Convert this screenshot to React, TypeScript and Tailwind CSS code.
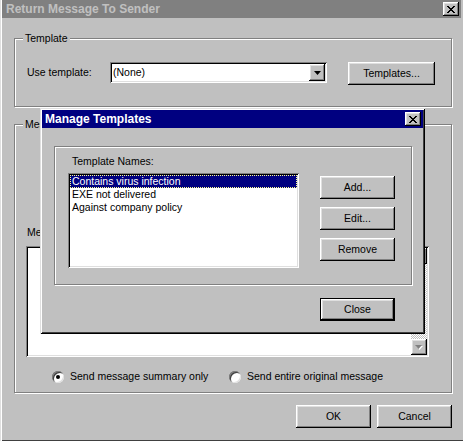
import React from 'react';

// win95-style bevels
const raised =
  'shadow-[inset_-1px_-1px_0_#000,inset_1px_1px_0_#fff,inset_-2px_-2px_0_#808080,inset_2px_2px_0_#dfdfdf]';
const sunken =
  'shadow-[inset_1px_1px_0_#808080,inset_-1px_-1px_0_#fff,inset_2px_2px_0_#000,inset_-2px_-2px_0_#dfdfdf]';
const etched = 'border border-[#808080] shadow-[inset_1px_1px_0_#fff,1px_1px_0_#fff]';

function Btn({
  children,
  className = '',
  isDefault = false,
}: {
  children: React.ReactNode;
  className?: string;
  isDefault?: boolean;
}) {
  return (
    <div className={`flex items-center justify-center bg-[#c0c0c0] ${isDefault ? 'border border-black' : ''} ${className}`}>
      <div className={`flex h-full w-full items-center justify-center ${raised}`}>{children}</div>
    </div>
  );
}

function CloseBox() {
  return (
    <div className={`flex h-[14px] w-[16px] items-center justify-center bg-[#c0c0c0] ${raised}`}>
      <svg width="8" height="7" viewBox="0 0 8 7" shapeRendering="crispEdges">
        <path d="M0 0h2v1h1v1h2V1h1V0h2v1H7v1H6v1H5v1h1v1h1v1h1v1H6V6H5V5H3v1H2v1H0V6h1V5h1V4h1V3H2V2H1V1H0z" fill="#000" />
      </svg>
    </div>
  );
}

function Radio({ checked, label }: { checked?: boolean; label: string }) {
  return (
    <div className="flex items-center">
      <div className="flex h-[12px] w-[12px] items-center justify-center rounded-full bg-white shadow-[inset_1px_1px_0_#808080,inset_-1px_-1px_0_#dfdfdf,inset_2px_2px_0_#404040]">
        {checked && <div className="h-[4px] w-[4px] rounded-full bg-black" />}
      </div>
      <span className="ml-[6px]">{label}</span>
    </div>
  );
}

export default function App() {
  const names = ['Contains virus infection', 'EXE not delivered', 'Against company policy'];

  return (
    <div className="relative h-[441px] w-[463px] overflow-hidden bg-[#c0c0c0] font-['Liberation_Sans',Arial,sans-serif] text-[10.5px] leading-[13px] text-black shadow-[inset_1px_0_0_#dfdfdf,inset_2px_0_0_#fff,inset_0_-1px_0_#404040]">
      {/* title bar (inactive) */}
      <div className="mx-[2px] flex h-[18px] items-center justify-between bg-[#808080] pl-[4px] pr-[2px]">
        <span className="text-[12px] font-bold text-[#c0c0c0]">Return Message To Sender</span>
        <CloseBox />
      </div>

      {/* Template group */}
      <div className={`relative ml-[14px] mt-[20px] h-[69px] w-[438px] ${etched}`}>
        <span className="absolute -top-[7px] left-[8px] bg-[#c0c0c0] px-[2px]">Template</span>
        <div className="flex items-start pl-[12px] pt-[23px]">
          <div className="flex h-[21px] w-[83px] items-center">Use template:</div>
          <div className={`flex h-[21px] w-[217px] items-center bg-white pl-[3px] pr-[2px] ${sunken}`}>
            <span className="flex-1">(None)</span>
            <div className={`flex h-[17px] w-[16px] items-center justify-center bg-[#c0c0c0] ${raised}`}>
              <svg width="7" height="4" viewBox="0 0 7 4">
                <polygon points="0,0 7,0 3.5,4" fill="#000" />
              </svg>
            </div>
          </div>
          <Btn className="ml-[21px] h-[23px] w-[87px]">Templates...</Btn>
        </div>
      </div>

      {/* Message group (mostly covered by the dialog) */}
      <div className={`relative ml-[14px] mt-[17px] h-[269px] w-[438px] ${etched}`}>
        <span className="absolute -top-[7px] left-[8px] bg-[#c0c0c0] px-[2px]">Message</span>
        <div className="pl-[11px] pt-[101px]">
          <div className="pl-[1px]">Message text:</div>
          <div className={`mt-[7px] flex h-[111px] w-[403px] bg-white p-[2px] ${sunken}`}>
            <div className="flex-1" />
            <div className="flex w-[16px] flex-col bg-[repeating-conic-gradient(#fff_0_25%,#c0c0c0_0_50%)] bg-[length:2px_2px]">
              <div className={`h-[16px] bg-[#c0c0c0] ${raised}`} />
              <div className="flex-1" />
              <div className={`flex h-[16px] items-center justify-center bg-[#c0c0c0] ${raised}`}>
                <svg width="8" height="5" viewBox="0 0 8 5">
                  <polygon points="1,1 8,1 4.5,5" fill="#fff" />
                  <polygon points="0,0 7,0 3.5,4" fill="#808080" />
                </svg>
              </div>
            </div>
          </div>
          <div className="mt-[13px] flex items-center pl-[26px]">
            <div className="w-[177px]">
              <Radio checked label="Send message summary only" />
            </div>
            <Radio label="Send entire original message" />
          </div>
        </div>
      </div>

      {/* OK / Cancel */}
      <div className="mt-[12px] flex justify-end gap-[6px] pr-[11px]">
        <Btn className="h-[23px] w-[75px]">OK</Btn>
        <Btn className="h-[23px] w-[75px]">Cancel</Btn>
      </div>

      {/* Manage Templates dialog on top */}
      <div className="absolute left-[40px] top-[108px] h-[226px] w-[385px] bg-[#c0c0c0] p-[2px] shadow-[inset_1px_1px_0_#dfdfdf,inset_-1px_-1px_0_#000,inset_2px_2px_0_#fff,inset_-2px_-2px_0_#404040]">
        <div className="flex h-[18px] items-center justify-between bg-[#000080] pl-[3px] pr-[2px]">
          <span className="text-[12px] font-bold text-white">Manage Templates</span>
          <CloseBox />
        </div>

        <div className={`ml-[12px] mt-[18px] h-[139px] w-[358px] ${etched}`}>
          <div className="flex items-start pl-[13px] pt-[8px]">
            <div>
              <div className="pl-[4px]">Template Names:</div>
              <div className={`mt-[5px] h-[95px] w-[231px] bg-white p-[2px] ${sunken}`}>
                {names.map((n, i) => (
                  <div
                    key={n}
                    className={
                      i === 0
                        ? 'h-[13px] bg-[#000080] pl-[2px] text-white outline outline-1 outline-dotted -outline-offset-1 outline-[#ffff90]'
                        : 'h-[13px] pl-[2px]'
                    }
                  >
                    {n}
                  </div>
                ))}
              </div>
            </div>
            <div className="ml-[21px] mt-[21px] flex flex-col gap-[8px]">
              <Btn className="h-[23px] w-[75px]">Add...</Btn>
              <Btn className="h-[23px] w-[75px]">Edit...</Btn>
              <Btn className="h-[23px] w-[75px]">Remove</Btn>
            </div>
          </div>
        </div>

        <Btn isDefault className="ml-[278px] mt-[13px] h-[23px] w-[75px]">
          Close
        </Btn>
      </div>
    </div>
  );
}
